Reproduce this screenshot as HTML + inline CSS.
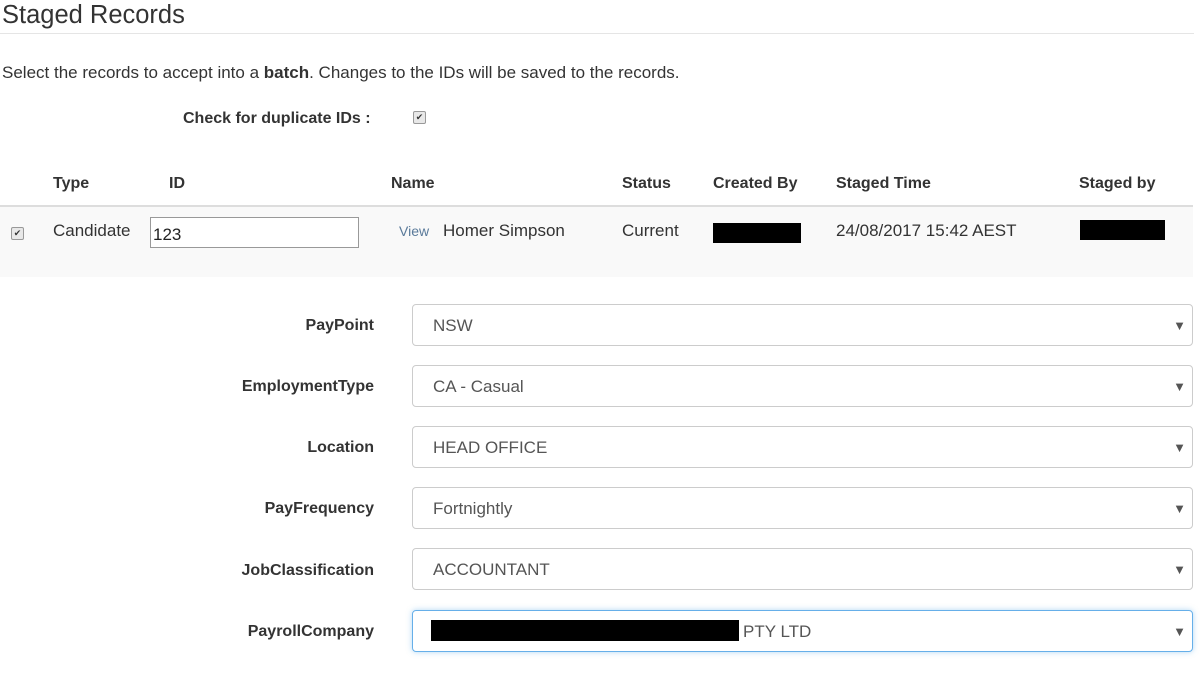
<!DOCTYPE html><html><head><style>
body{margin:0;width:1204px;height:676px;overflow:hidden;background:#fff;font-family:"Liberation Sans",sans-serif;color:#333;font-size:17px;position:relative}
.a{position:absolute;white-space:nowrap}
.b{font-weight:bold;font-size:16px}
.sel{position:absolute;left:412px;width:779px;height:40px;border:1px solid #ccc;border-radius:4px;color:#555}
.sel span{position:absolute;left:20px;top:11px}
.sel i{position:absolute;right:6px;top:13px;font-style:normal;font-size:13px;color:#555}
.lab{position:absolute;right:830px;font-weight:bold;font-size:16px;color:#333}
.cb{position:absolute;width:11px;height:11px;border:1px solid #999;border-radius:2px;background:#e8e8e8;font-size:9px;line-height:11px;text-align:center;color:#333}
</style></head><body>
<div class="a" style="left:2px;top:1px;font-size:25.5px;color:#333">Staged Records</div>
<div class="a" style="left:0;top:33px;width:1194px;height:1px;background:#e5e5e5"></div>
<div class="a" style="left:2px;top:63px">Select the records to accept into a <b style="font-size:17px">batch</b>. Changes to the IDs will be saved to the records.</div>
<div class="a b" style="left:183px;top:110px">Check for duplicate IDs :</div>
<div class="cb" style="left:413px;top:111px">✔</div>
<div class="a b" style="left:53px;top:175px">Type</div>
<div class="a b" style="left:169px;top:175px">ID</div>
<div class="a b" style="left:391px;top:175px">Name</div>
<div class="a b" style="left:622px;top:175px">Status</div>
<div class="a b" style="left:713px;top:175px">Created By</div>
<div class="a b" style="left:836px;top:175px">Staged Time</div>
<div class="a b" style="left:1079px;top:175px">Staged by</div>
<div class="a" style="left:0;top:205px;width:1193px;height:2px;background:#ddd"></div>
<div class="a" style="left:0;top:207px;width:1193px;height:70px;background:#f9f9f9"></div>
<div class="cb" style="left:11px;top:227px">✔</div>
<div class="a" style="left:53px;top:221px">Candidate</div>
<div class="a" style="left:150px;top:217px;width:207px;height:29px;border:1px solid #999;background:#fff"></div>
<div class="a" style="left:153px;top:225px;color:#222">123</div>
<div class="a" style="left:399px;top:223px;font-size:14px;color:#5a7a9a">View</div>
<div class="a" style="left:443px;top:221px">Homer Simpson</div>
<div class="a" style="left:622px;top:221px">Current</div>
<div class="a" style="left:713px;top:223px;width:88px;height:20px;background:#000"></div>
<div class="a" style="left:836px;top:221px">24/08/2017 15:42 AEST</div>
<div class="a" style="left:1080px;top:220px;width:85px;height:20px;background:#000"></div>

<div class="lab" style="top:317px">PayPoint</div>
<div class="sel" style="top:304px"><span>NSW</span><i>▼</i></div>
<div class="lab" style="top:378px">EmploymentType</div>
<div class="sel" style="top:365px"><span>CA - Casual</span><i>▼</i></div>
<div class="lab" style="top:439px">Location</div>
<div class="sel" style="top:426px"><span>HEAD OFFICE</span><i>▼</i></div>
<div class="lab" style="top:500px">PayFrequency</div>
<div class="sel" style="top:487px"><span>Fortnightly</span><i>▼</i></div>
<div class="lab" style="top:562px">JobClassification</div>
<div class="sel" style="top:548px"><span>ACCOUNTANT</span><i>▼</i></div>
<div class="lab" style="top:623px">PayrollCompany</div>
<div class="sel" style="top:610px;border-color:#66afe9;box-shadow:0 0 6px rgba(102,175,233,.5)"><div class="a" style="left:18px;top:9px;width:308px;height:21px;background:#000"></div><span style="left:330px">PTY LTD</span><i>▼</i></div>
</body></html>
